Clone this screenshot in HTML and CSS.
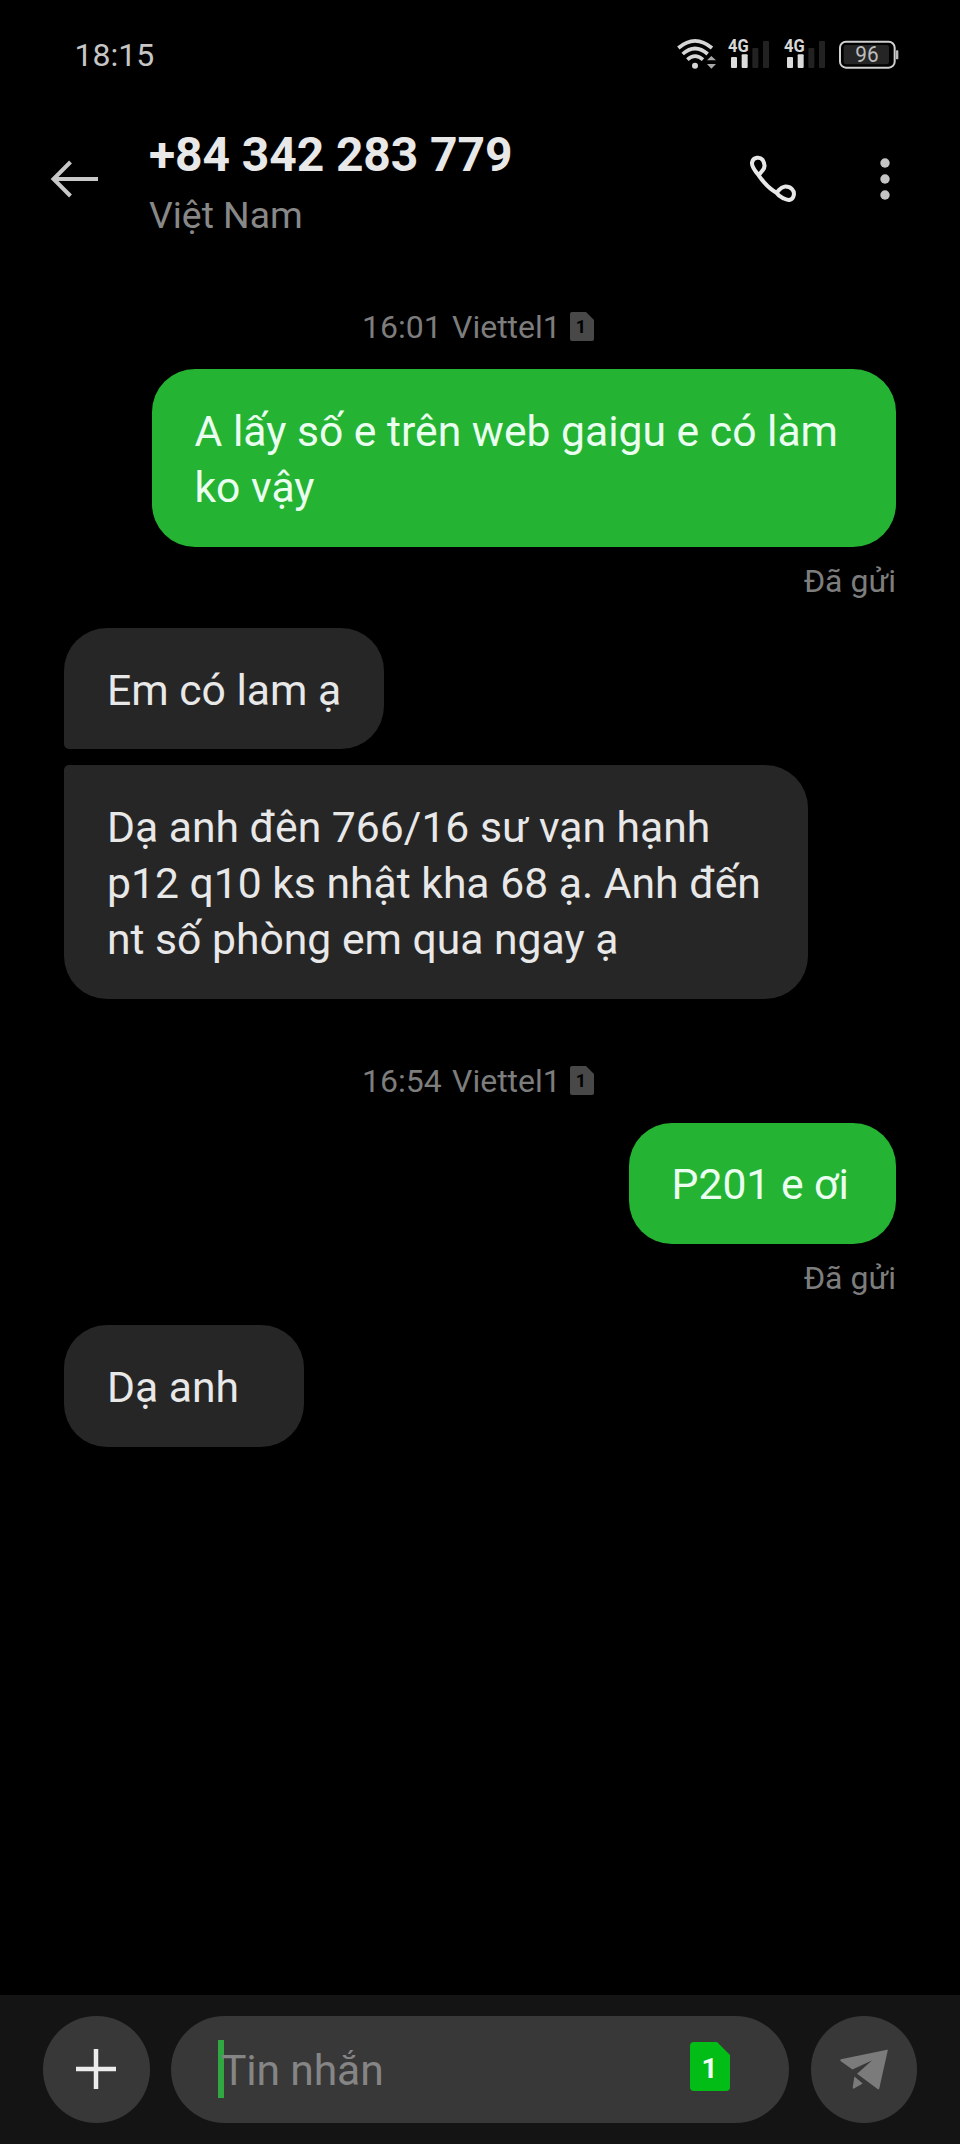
FILE: index.html
```html
<!DOCTYPE html>
<html lang="vi">
<head>
<meta charset="utf-8">
<title>+84 342 283 779</title>
<link rel="stylesheet" href="styles.css">
</head>
<body>
<div class="phone">
  <div class="status">
    <span class="clock">18:15</span>
    <div class="status-icons">
      <svg class="wifi" viewBox="0 0 120 96">
        <g fill="none" stroke="#d6d6d6" stroke-width="11">
          <path d="M4 30Q54 -13 105 30"/><path d="M17 48Q54 15 92 48"/><path d="M31 65Q54 44 78 65"/>
        </g>
        <circle cx="54" cy="83" r="9" fill="#d6d6d6"/>
        <path d="M90 67L103 54L117 67ZM90 78H117L103 92Z" fill="#a8a8a8"/>
      </svg>
      <svg class="signal" viewBox="0 0 126 96">
        <text class="net" x="0" y="43" textLength="62" lengthAdjust="spacingAndGlyphs">4G</text>
        <rect x="9" y="57" width="18" height="33" rx="3" fill="#dcdcdc"/><rect x="41" y="49" width="18" height="41" rx="3" fill="#dcdcdc"/>
        <rect x="73" y="30" width="18" height="60" rx="3" fill="#222"/><rect x="105" y="9" width="18" height="81" rx="3" fill="#222"/>
      </svg>
      <svg class="signal second" viewBox="0 0 126 96">
        <text class="net" x="0" y="43" textLength="62" lengthAdjust="spacingAndGlyphs">4G</text>
        <rect x="9" y="57" width="18" height="33" rx="3" fill="#dcdcdc"/><rect x="41" y="49" width="18" height="41" rx="3" fill="#dcdcdc"/>
        <rect x="73" y="30" width="18" height="60" rx="3" fill="#222"/><rect x="105" y="9" width="18" height="81" rx="3" fill="#222"/>
      </svg>
      <svg class="battery" viewBox="0 0 180 96">
        <rect x="3" y="11" width="164" height="78" rx="18" fill="none" stroke="#d0d0d0" stroke-width="6"/>
        <rect x="14" y="21" width="136" height="58" rx="7" fill="#252525"/>
        <rect x="171" y="37" width="7" height="27" rx="2" fill="#bdbdbd"/>
        <text class="level" x="49" y="72" textLength="70" lengthAdjust="spacingAndGlyphs">96</text>
      </svg>
    </div>
  </div>

  <header class="header">
    <svg class="back" viewBox="0 0 48 38"><path d="M47 19H3M19.500 2L2.500 19L19.500 36" fill="none" stroke="#c8c8c8" stroke-width="4"/></svg>
    <div class="contact">
      <h1 class="number">+84 342 283 779</h1>
      <div class="country">Việt Nam</div>
    </div>
    <svg class="call" viewBox="0 0 138 138">
      <path d="M26 58C10 39 5 27 6 20C9 2 31 2 38 12C46 25 46 34 38 43L26 58C41 80 57 98 79 110M79 110C88 103 91 93 103 92C123 90 135 105 131 119C128 133 115 135 100 127C91 123 84 118 79 110" fill="none" stroke="#e8e8e8" stroke-width="12" stroke-linejoin="round"/>
    </svg>
    <svg class="more" viewBox="0 0 10 44"><circle cx="5" cy="6" r="4.700"/><circle cx="5" cy="22" r="4.700"/><circle cx="5" cy="38" r="4.700"/></svg>
  </header>

  <main class="thread">
    <div class="stamp"><span class="when">16:01</span><span class="carrier">Viettel1</span>
      <svg class="sim" viewBox="0 0 24 29"><path d="M2 0H16L24 8V27Q24 29 22 29H2Q0 29 0 27V2Q0 0 2 0Z" fill="#484848"/><text class="sim-num" x="11" y="21">1</text></svg>
    </div>
    <div class="bubble out wide">A lấy số e trên web gaigu e có làm<br>ko vậy</div>
    <div class="sent">Đã gửi</div>
    <div class="bubble in first">Em có lam ạ</div>
    <div class="bubble in last">Dạ anh đên 766/16 sư vạn hạnh<br>p12 q10 ks nhật kha 68 ạ. Anh đến<br>nt số phòng em qua ngay ạ</div>
    <div class="stamp later"><span class="when">16:54</span><span class="carrier">Viettel1</span>
      <svg class="sim" viewBox="0 0 24 29"><path d="M2 0H16L24 8V27Q24 29 22 29H2Q0 29 0 27V2Q0 0 2 0Z" fill="#484848"/><text class="sim-num" x="11" y="21">1</text></svg>
    </div>
    <div class="bubble out room">P201 e ơi</div>
    <div class="sent">Đã gửi</div>
    <div class="bubble in short">Dạ anh</div>
  </main>

  <footer class="composer">
    <div class="round"><svg class="plus" viewBox="0 0 40 40"><path d="M20 0V40M0 20H40" stroke="#ececec" stroke-width="4.500"/></svg></div>
    <div class="field">
      <span class="caret"></span><span class="hint">Tin nhắn</span>
      <svg class="sim-pick" viewBox="0 0 40 49"><path d="M4 0H27L40 13V45Q40 49 36 49H4Q0 49 0 45V4Q0 0 4 0Z" fill="#02bd16"/><text class="pick-num" x="19.500" y="35.700">1</text></svg>
    </div>
    <div class="round"><svg class="send" viewBox="0 0 144 124"><path d="M2 31L142 2Q144 1 144 4L118 120Q116 124 112 120L51 75L96 35L37 62L1 36Q-1 33 2 31ZM43 83L68 104L43 119Q37 122 38 115Z" fill="#7b7b7b"/></svg></div>
  </footer>
</div>
</body>
</html>
```
FILE: styles.css
```css
* { box-sizing: border-box; }
body { margin: 0; background: #000; font-family: Roboto, sans-serif; }
svg { display: block; flex: none; overflow: visible; }
.phone { width: 960px; height: 2144px; display: flex; flex-direction: column; background: #000; white-space: nowrap; overflow: hidden; }

.status { height: 112px; flex: none; display: flex; align-items: center; justify-content: space-between; padding: 0 61px 0 74.500px; }
.clock { font-size: 32px; line-height: 40px; padding-bottom: 2px; color: #c6c6c6; }
.status-icons { display: flex; align-items: center; padding-bottom: 5px; }
.wifi { width: 40px; height: 32px; margin-right: 11px; }
.signal { width: 42px; height: 32px; }
.second { margin: 0 13px 0 14px; }
.battery { width: 60px; height: 32px; }
.net { font-size: 53px; font-weight: 700; fill: #d8d8d8; }
.level { font-size: 65px; fill: #bcbcbc; }

.header { height: 134px; flex: none; display: flex; align-items: center; padding: 0 70px 0 51px; }
.back { width: 48px; height: 38px; margin-right: 50px; }
.contact { flex: 1; padding-top: 6px; }
.number { margin: 0 0 5px; font-size: 48px; line-height: 60px; font-weight: 700; letter-spacing: -0.1px; color: #e8e8e8; }
.country { font-size: 37.33px; line-height: 50px; color: #888; }
.call { width: 46px; height: 46px; margin-right: 84px; }
.more { width: 10px; height: 44px; fill: #c4c4c4; }

.thread { flex: 1; display: flex; flex-direction: column; padding: 61px 64px 0; }
.stamp { display: flex; align-items: center; height: 40px; margin: 0 0 22px 298px; font-size: 32px; line-height: 40px; color: #7d7d7d; }
.later { margin-top: 62px; }
.when { width: 90px; }
.carrier { width: 118px; }
.sim { width: 24px; height: 29px; margin-bottom: 1px; }
.sim-num { font-size: 18px; font-weight: 700; text-anchor: middle; fill: #000; }
.bubble { flex: none; padding: 34px 43px 31.5px; border-radius: 43px; font-size: 42.67px; line-height: 56px; }
.out { align-self: flex-end; padding: 33.5px 43px 32px 42.5px; background: #24b332; color: #eafff0; }
.in { align-self: flex-start; background: #262626; color: #e8e8e8; }
.wide { width: 744px; }
.first { width: 320px; border-bottom-left-radius: 5px; margin-bottom: 16px; }
.last { width: 744px; border-top-left-radius: 5px; }
.room { width: 267px; }
.short { width: 240px; }
.sent { align-self: flex-end; height: 40px; margin: 14px 0 27px; font-size: 32px; line-height: 40px; color: #7d7d7d; }

.composer { height: 149.500px; flex: none; display: grid; grid-template-columns: 106.500px 1fr 106.500px; gap: 21.500px; padding: 21.500px 43px 0; background: #141414; }
.round { height: 106.500px; border-radius: 50%; display: flex; align-items: center; justify-content: center; background: #383838; }
.plus { width: 40px; height: 40px; }
.send { width: 48px; height: 41px; }
.field { height: 106.500px; border-radius: 54px; display: flex; align-items: center; padding: 0 59px 0 47px; background: #383838; }
.caret { width: 6px; height: 58px; background: #31a742; }
.hint { flex: 1; margin-left: -3px; font-size: 42.67px; line-height: 56px; letter-spacing: -0.15px; padding-top: 2px; color: #858585; }
.sim-pick { width: 40px; height: 49px; margin-bottom: 6px; }
.pick-num { font-size: 28px; font-weight: 700; text-anchor: middle; fill: #f0fff2; }
```
